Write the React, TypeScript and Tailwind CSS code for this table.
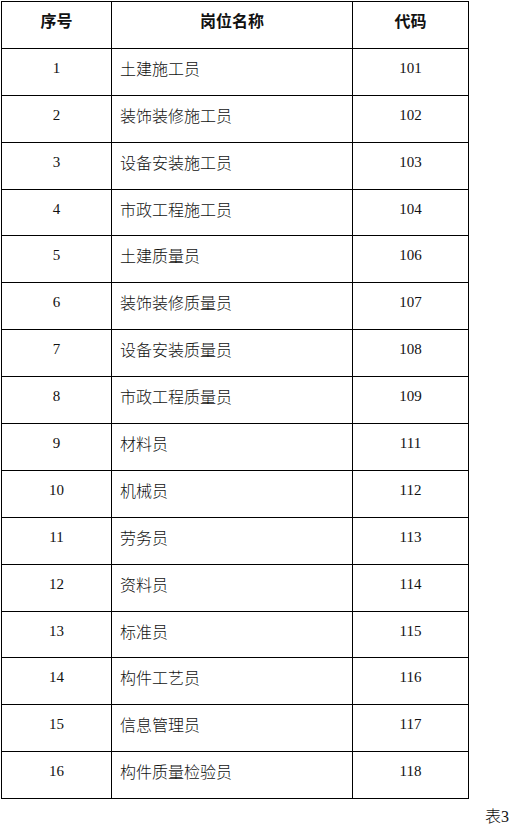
import React from 'react';

const rows: [string, string, string][] = [
  ['1', '土建施工员', '101'],
  ['2', '装饰装修施工员', '102'],
  ['3', '设备安装施工员', '103'],
  ['4', '市政工程施工员', '104'],
  ['5', '土建质量员', '106'],
  ['6', '装饰装修质量员', '107'],
  ['7', '设备安装质量员', '108'],
  ['8', '市政工程质量员', '109'],
  ['9', '材料员', '111'],
  ['10', '机械员', '112'],
  ['11', '劳务员', '113'],
  ['12', '资料员', '114'],
  ['13', '标准员', '115'],
  ['14', '构件工艺员', '116'],
  ['15', '信息管理员', '117'],
  ['16', '构件质量检验员', '118'],
];

const serif = "font-['Liberation_Serif','Noto_Sans_CJK_SC',serif]";
const cjk = "font-['Noto_Sans_CJK_SC',sans-serif]";

export default function App() {
  return (
    <div className="w-[522px] h-[828px] bg-white text-[#111] overflow-hidden">
      <div className="pt-[1px] pl-[1px]">
        <table className="border-collapse w-[467px] table-fixed">
          <colgroup>
            <col className="w-[110px]" />
            <col className="w-[241px]" />
            <col className="w-[116px]" />
          </colgroup>
          <thead>
            <tr className="h-[46.9px]">
              <th className={`border border-black pt-0 pb-[10px] text-center text-[16px] leading-[20px] font-bold ${cjk}`}>序号</th>
              <th className={`border border-black pt-0 pb-[10px] text-center text-[16px] leading-[20px] font-bold ${cjk}`}>岗位名称</th>
              <th className={`border border-black pt-0 pb-[10px] text-center text-[16px] leading-[20px] font-bold ${cjk}`}>代码</th>
            </tr>
          </thead>
          <tbody>
            {rows.map(([no, name, code]) => (
              <tr key={no} className="h-[46.9px]">
                <td className={`border border-black pt-0 pb-[8px] text-center text-[15px] leading-[20px] ${serif}`}>{no}</td>
                <td className={`border border-black pt-0 pb-[8px] pl-[8px] text-left text-[16px] leading-[20px] font-light ${cjk}`}>{name}</td>
                <td className={`border border-black pt-0 pb-[8px] text-center text-[15px] leading-[20px] ${serif}`}>{code}</td>
              </tr>
            ))}
          </tbody>
        </table>
      </div>
      <div className="flex justify-end pr-[13px] pt-[8px]">
        <span className={`text-[16px] leading-none font-light ${cjk}`}>
          表<span className={serif}>3</span>
        </span>
      </div>
    </div>
  );
}
